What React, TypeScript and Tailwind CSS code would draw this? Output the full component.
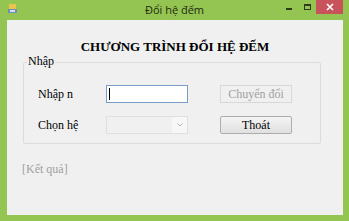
import React from 'react';

const App: React.FC = () => {
    return (
        <div className="w-[349px] h-[221px] bg-[#94c452] flex flex-col overflow-hidden select-none">
            {/* Title bar */}
            <div className="relative h-[20px] flex items-center justify-center shrink-0">
                <div className="absolute left-[8px] top-[4px] w-[10px] h-[10px]">
                    <svg width="10" height="10" viewBox="0 0 10 10">
                        <rect x="1" y="0" width="7" height="5" fill="#e8c44a" />
                        <rect x="0" y="5" width="9" height="4" fill="#6f8fb6" />
                        <rect x="2" y="6" width="5" height="2" fill="#d8dde4" />
                    </svg>
                </div>
                <span className="text-[11px] text-[#1e2a10] font-['Open_Sans','Liberation_Sans',sans-serif]">
                    Đổi hệ đếm
                </span>
                <div className="absolute right-[6px] top-0 flex items-start">
                    <div className="w-[18px] h-[14px] flex items-center justify-center">
                        <div className="w-[6px] h-[2px] bg-[#2e3b1a] mt-[3px]" />
                    </div>
                    <div className="w-[18px] h-[14px] flex items-center justify-center">
                        <div className="w-[7px] h-[6px] border border-[#2e3b1a] border-t-2" />
                    </div>
                    <div className="w-[27px] h-[14px] bg-[#c9535b] flex items-center justify-center">
                        <svg width="8" height="8" viewBox="0 0 8 8">
                            <path d="M1 1 L7 7 M7 1 L1 7" stroke="#ffffff" strokeWidth="1.6" />
                        </svg>
                    </div>
                </div>
            </div>

            {/* Client area */}
            <div className="flex-1 ml-[7px] mr-[6px] mb-[6px] bg-[#f0f0f0] flex flex-col font-['Liberation_Serif','Times_New_Roman',serif]">
                <div className="text-center font-bold text-[13px] text-black mt-[19px] leading-[16px]">
                    CHƯƠNG TRÌNH ĐỔI HỆ ĐẾM
                </div>

                {/* Group box */}
                <div className="relative ml-[16px] mr-[22px] mt-[7px] h-[82px] border border-[#dcdcdc] rounded-[2px]">
                    <span className="absolute left-[3px] top-[-9px] px-[1px] bg-[#f0f0f0] text-[12px] leading-[14px] text-black">
                        Nhập
                    </span>
                    <div className="flex flex-col gap-[13px] pt-[22px]">
                        <div className="flex items-center h-[18px]">
                            <span className="w-[82px] pl-[14px] text-[12px] text-black">Nhập n</span>
                            <div className="w-[82px] h-[18px] bg-white border border-[#7a9cc6] flex items-center pl-[2px]">
                                <div className="w-[1px] h-[12px] bg-black" />
                            </div>
                            <button className="ml-[32px] w-[72px] h-[18px] border border-[#d8d8d8] bg-[#f0f0f0] text-[12px] text-[#a0a0a0] leading-none">
                                Chuyển đổi
                            </button>
                        </div>
                        <div className="flex items-center h-[18px]">
                            <span className="w-[82px] pl-[14px] text-[12px] text-black">Chọn hệ</span>
                            <div className="w-[82px] h-[18px] bg-[#f0f0f0] border border-[#e0e0e0] flex items-center justify-end">
                                <div className="w-[15px] h-full bg-[#f7f7f7] flex items-center justify-center">
                                    <svg width="6" height="4" viewBox="0 0 6 4">
                                        <path d="M0.5 0.5 L3 3 L5.5 0.5" stroke="#b8b8b8" strokeWidth="1" fill="none" />
                                    </svg>
                                </div>
                            </div>
                            <button className="ml-[32px] w-[72px] h-[18px] border border-[#adadad] rounded-[2px] bg-gradient-to-b from-[#f4f4f4] to-[#e0e0e0] text-[12px] text-black leading-none">
                                Thoát
                            </button>
                        </div>
                    </div>
                </div>

                <div className="ml-[15px] mt-[16px] text-[12px] text-[#a0a0a0]">[Kết quả]</div>
            </div>
        </div>
    );
};

export default App;
